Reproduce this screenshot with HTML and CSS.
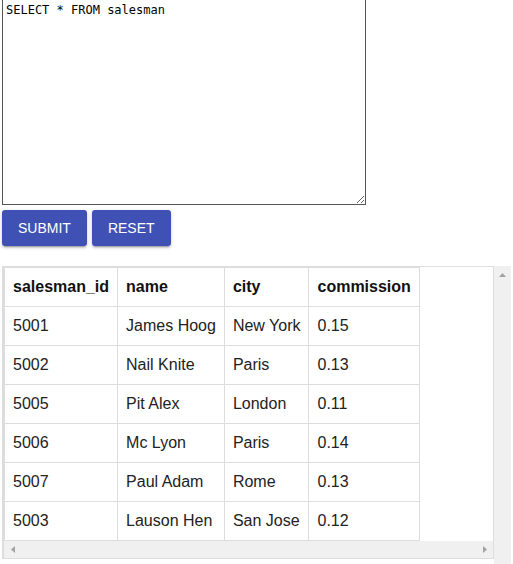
FILE: index.html
```html
<!DOCTYPE html>
<html>
<head>
<meta charset="utf-8">
<title>SQL</title>
<link rel="stylesheet" href="styles.css">
</head>
<body>
<div class="page">
  <textarea class="query" spellcheck="false">SELECT * FROM salesman</textarea>
  <div class="actions">
    <button class="btn">SUBMIT</button>
    <button class="btn">RESET</button>
  </div>
  <div class="results">
    <div class="box">
      <table class="grid">
        <thead>
          <tr><th>salesman_id</th><th>name</th><th>city</th><th>commission</th></tr>
        </thead>
        <tbody>
          <tr><td>5001</td><td>James Hoog</td><td>New York</td><td>0.15</td></tr>
          <tr><td>5002</td><td>Nail Knite</td><td>Paris</td><td>0.13</td></tr>
          <tr><td>5005</td><td>Pit Alex</td><td>London</td><td>0.11</td></tr>
          <tr><td>5006</td><td>Mc Lyon</td><td>Paris</td><td>0.14</td></tr>
          <tr><td>5007</td><td>Paul Adam</td><td>Rome</td><td>0.13</td></tr>
          <tr><td>5003</td><td>Lauson Hen</td><td>San Jose</td><td>0.12</td></tr>
        </tbody>
      </table>
      <div class="hscroll">
        <svg class="arrow" width="4" height="7" viewBox="0 0 4 7"><path d="M4 0L0 3.5L4 7Z"/></svg>
        <svg class="arrow" width="4" height="7" viewBox="0 0 4 7"><path d="M0 0L4 3.5L0 7Z"/></svg>
      </div>
    </div>
    <div class="vscroll">
      <svg class="arrow" width="7" height="4" viewBox="0 0 7 4"><path d="M0 4L3.5 0L7 4Z"/></svg>
    </div>
  </div>
</div>
</body>
</html>
```
FILE: styles.css
```css
html, body {
  margin: 0;
  padding: 0;
  background: #fff;
  overflow: hidden;
}
body {
  font-family: "Liberation Sans", Arial, sans-serif;
  color: #222;
}
.page {
  padding: 0 2px;
  margin-top: -1px;
}
.query {
  display: block;
  box-sizing: border-box;
  width: 364px;
  height: 206px;
  margin: 0;
  padding: 3px 3px 2px;
  border: 1px solid #555;
  border-radius: 0;
  font-family: "DejaVu Sans Mono", "Liberation Mono", monospace;
  font-size: 12px;
  line-height: 15px;
  color: #000;
  background: #fff;
  outline: none;
}
.actions {
  display: flex;
  gap: 5px;
  margin-top: 5px;
}
.btn {
  height: 36px;
  padding: 0 16px;
  border: none;
  border-radius: 3px;
  background: #3f51b5;
  color: #fff;
  font-family: "Liberation Sans", Arial, sans-serif;
  font-size: 14px;
  box-shadow: 0 2px 2px 0 rgba(0,0,0,.14), 0 3px 1px -2px rgba(0,0,0,.2), 0 1px 5px 0 rgba(0,0,0,.12);
}
.results {
  display: flex;
  align-items: flex-start;
  margin-top: 20px;
  height: 320px;
}
.box {
  flex: 1;
  border: 1px solid #ddd;
  border-left-width: 2px;
}
.grid {
  border-collapse: collapse;
  border: 1px solid #ddd;
  font-size: 16px;
  line-height: 18px;
}
.grid th, .grid td {
  border: 1px solid #ddd;
  padding: 10px 8px;
  text-align: left;
  white-space: nowrap;
}
.grid th {
  font-weight: bold;
  color: #111;
}
.grid td {
  color: #222;
}
.hscroll {
  display: flex;
  justify-content: space-between;
  align-items: center;
  height: 17px;
  padding: 0 6px 0 7px;
  background: #f0f0f0;
}
.vscroll {
  align-self: stretch;
  display: flex;
  flex-direction: column;
  align-items: center;
  width: 17px;
  padding-top: 7px;
  box-sizing: border-box;
  background: #f0f0f0;
}
.arrow {
  display: block;
  fill: #a3a3a3;
}
```
